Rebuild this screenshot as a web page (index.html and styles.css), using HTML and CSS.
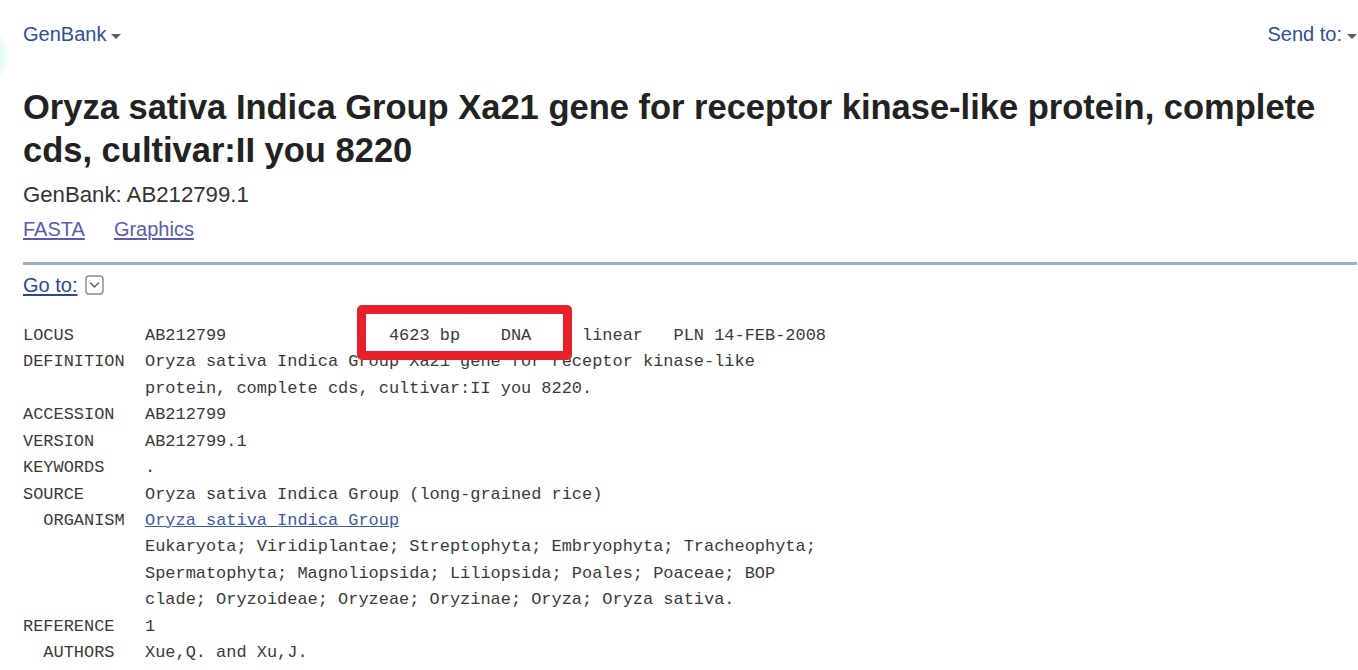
FILE: index.html
```html
<!DOCTYPE html>
<html lang="en">
<head>
<meta charset="utf-8">
<title>Oryza sativa Indica Group Xa21 gene - Nucleotide - NCBI</title>
<link rel="stylesheet" href="styles.css">
</head>
<body>
<div class="glow"></div>
<div class="page">
  <div class="topbar">
    <a class="menu" href="#">GenBank<span class="tri"></span></a>
    <a class="menu" href="#">Send to:<span class="tri"></span></a>
  </div>
  <h1 class="title">Oryza sativa Indica Group Xa21 gene for receptor kinase-like protein, complete cds, cultivar:II you 8220</h1>
  <p class="subtitle">GenBank: AB212799.1</p>
  <div class="links">
    <a href="#" class="vlink">FASTA</a>
    <a href="#" class="vlink">Graphics</a>
  </div>
  <div class="rule"></div>
  <div class="goto">
    <a href="#" class="gotolink">Go to:</a>
    <svg class="gotoicon" width="19" height="20" viewBox="0 0 19 20" aria-hidden="true">
      <rect x="1" y="1" width="17" height="18" rx="3" ry="3" fill="none" stroke="#8a8a8a" stroke-width="1.4"/>
      <path d="M5.5 8 L9.5 12 L13.5 8" fill="none" stroke="#666" stroke-width="1.6" stroke-linecap="round" stroke-linejoin="round"/>
    </svg>
  </div>
  <div class="record">
<pre class="flat">LOCUS       AB212799                4623 bp    DNA     linear   PLN 14-FEB-2008
DEFINITION  Oryza sativa Indica Group Xa21 gene for receptor kinase-like
            protein, complete cds, cultivar:II you 8220.
ACCESSION   AB212799
VERSION     AB212799.1
KEYWORDS    .
SOURCE      Oryza sativa Indica Group (long-grained rice)
  ORGANISM  <a href="#" class="org">Oryza sativa Indica Group</a>
            Eukaryota; Viridiplantae; Streptophyta; Embryophyta; Tracheophyta;
            Spermatophyta; Magnoliopsida; Liliopsida; Poales; Poaceae; BOP
            clade; Oryzoideae; Oryzeae; Oryzinae; Oryza; Oryza sativa.
REFERENCE   1
  AUTHORS   Xue,Q. and Xu,J.</pre>
    <div class="highlight"></div>
  </div>
</div>
</body>
</html>
```

FILE: styles.css
```css
html, body {
  margin: 0;
  padding: 0;
  background: #ffffff;
  overflow: hidden;
}

body {
  font-family: "Liberation Sans", Arial, sans-serif;
  color: #333333;
  width: 1358px;
  height: 670px;
  position: relative;
}

.glow {
  position: absolute;
  left: -46px;
  top: 26px;
  width: 52px;
  height: 60px;
  border-radius: 50%;
  background: #e4fbf5;
  filter: blur(2px);
}

.page {
  padding-left: 23px;
  padding-right: 1px;
}

.topbar {
  display: flex;
  justify-content: space-between;
  align-items: center;
  padding-top: 22px;
  height: 24px;
}

.menu {
  display: flex;
  align-items: center;
  font-size: 20px;
  line-height: 24px;
  color: #2f4f96;
  text-decoration: none;
}

.tri {
  display: inline-block;
  width: 0;
  height: 0;
  margin-left: 5px;
  margin-top: 4px;
  border-left: 5.5px solid transparent;
  border-right: 5.5px solid transparent;
  border-top: 5px solid #5f5f5f;
}

.title {
  margin: 40px 0 0 0;
  font-size: 34.5px;
  line-height: 43px;
  font-weight: bold;
  color: #222222;
  width: 1325px;
}

.subtitle {
  margin: 9px 0 0 0;
  font-size: 22.2px;
  line-height: 28px;
  color: #333333;
}

.links {
  margin-top: 7px;
  display: flex;
  gap: 29px;
  font-size: 20px;
  line-height: 26px;
}

.vlink {
  color: #5b5bb0;
  text-decoration: underline;
  text-underline-offset: 2px;
}

.rule {
  margin-top: 20px;
  height: 3px;
  background: #97b0c8;
}

.goto {
  margin-top: 7px;
  display: flex;
  align-items: center;
  gap: 8px;
  height: 26px;
}

.gotolink {
  font-size: 20px;
  line-height: 26px;
  color: #2b4a8b;
  text-decoration: underline;
  text-underline-offset: 2px;
}

.gotoicon {
  display: block;
  margin-top: -1px;
}

.record {
  position: relative;
  margin-top: 25px;
}

.flat {
  margin: 0;
  font-family: "Liberation Mono", "Courier New", monospace;
  font-size: 16.95px;
  line-height: 26.42px;
  color: #3a3a3a;
  white-space: pre;
}

.org {
  color: #3d5ba3;
  text-decoration: underline;
}

.highlight {
  position: absolute;
  left: 334px;
  top: -18px;
  width: 197px;
  height: 37px;
  border: 9px solid #e8202a;
  border-radius: 5px;
}
```
